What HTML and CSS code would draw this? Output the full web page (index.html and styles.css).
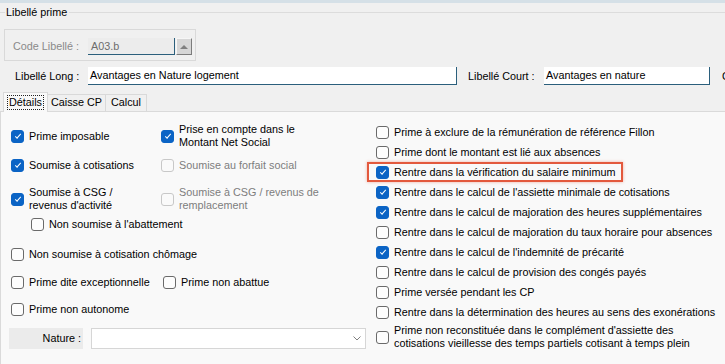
FILE: index.html
```html
<!DOCTYPE html>
<html lang="fr">
<head>
  <meta charset="UTF-8">
  <title>Libellé prime</title>
  <link rel="stylesheet" href="styles.css">
</head>
<body>
  <div class="titlebar"></div>

  <div class="group-title"><span>Libellé prime</span></div>

  <div class="code-box">
    <span class="lbl muted">Code Libellé :</span>
    <span class="field disabled">A03.b</span>
    <span class="spin"></span>
  </div>

  <div class="libelle-row">
    <span class="lbl long-lbl">Libellé Long :</span>
    <span class="field long">Avantages en Nature logement</span>
    <span class="lbl court-lbl">Libellé Court :</span>
    <span class="field court">Avantages en nature</span>
    <span class="lbl cut">C</span>
  </div>

  <div class="tabs">
    <div class="tab active"><span>Détails</span></div>
    <div class="tab caisse">Caisse CP</div>
    <div class="tab calcul">Calcul</div>
  </div>

  <div class="panel">
    <div class="col-left">
      <div class="row r1">
        <label class="check"><input type="checkbox" checked>Prime imposable</label>
        <label class="check"><input type="checkbox" checked><span>Prise en compte dans le<br>Montant Net Social</span></label>
      </div>
      <div class="row r2">
        <label class="check"><input type="checkbox" checked>Soumise à cotisations</label>
        <label class="check off"><input type="checkbox" disabled>Soumise au forfait social</label>
      </div>
      <div class="row r3">
        <label class="check"><input type="checkbox" checked><span>Soumise à CSG /<br>revenus d'activité</span></label>
        <label class="check off"><input type="checkbox" disabled><span>Soumise à CSG / revenus de<br>remplacement</span></label>
      </div>
      <div class="row r4">
        <label class="check"><input type="checkbox">Non soumise à l'abattement</label>
      </div>
      <div class="row r5">
        <label class="check"><input type="checkbox">Non soumise à cotisation chômage</label>
      </div>
      <div class="row r6">
        <label class="check"><input type="checkbox">Prime dite exceptionnelle</label>
        <label class="check"><input type="checkbox">Prime non abattue</label>
      </div>
      <div class="row r7">
        <label class="check"><input type="checkbox">Prime non autonome</label>
      </div>
      <div class="nature">
        <span class="nature-lbl">Nature :</span>
        <div class="select">
          <svg width="8" height="5" viewBox="0 0 8 5"><path d="M0.5 0.5L4 4L7.5 0.5" fill="none" stroke="#808080" stroke-width="1"/></svg>
        </div>
      </div>
    </div>

    <div class="col-right">
      <label class="check"><input type="checkbox">Prime à exclure de la rémunération de référence Fillon</label>
      <label class="check"><input type="checkbox">Prime dont le montant est lié aux absences</label>
      <label class="check hl"><input type="checkbox" checked>Rentre dans la vérification du salaire minimum</label>
      <label class="check"><input type="checkbox" checked>Rentre dans le calcul de l'assiette minimale de cotisations</label>
      <label class="check"><input type="checkbox" checked>Rentre dans le calcul de majoration des heures supplémentaires</label>
      <label class="check"><input type="checkbox">Rentre dans le calcul de majoration du taux horaire pour absences</label>
      <label class="check"><input type="checkbox" checked>Rentre dans le calcul de l'indemnité de précarité</label>
      <label class="check"><input type="checkbox">Rentre dans le calcul de provision des congés payés</label>
      <label class="check"><input type="checkbox">Prime versée pendant les CP</label>
      <label class="check"><input type="checkbox">Rentre dans la détermination des heures au sens des exonérations</label>
      <label class="check two"><input type="checkbox"><span>Prime non reconstituée dans le complément d'assiette des<br>cotisations vieillesse des temps partiels cotisant à temps plein</span></label>
    </div>
  </div>
</body>
</html>
```

FILE: styles.css
```css
* {
  box-sizing: border-box;
}

body {
  margin: 0;
  width: 725px;
  height: 364px;
  overflow: hidden;
  background: #f0f0f0;
  color: #000;
  font: 10.8px "Liberation Sans", Arial, sans-serif;
}

.titlebar {
  height: 3px;
  background: #d5e0e7;
}

/* group header */
.group-title {
  display: flex;
  align-items: center;
  height: 18px;
}
.group-title::before {
  content: '';
  width: 5px;
  border-top: 1px solid #dcdcdc;
}
.group-title::after {
  content: '';
  flex: 1;
  border-top: 1px solid #dcdcdc;
}
.group-title span {
  padding: 0 2px 0 1px;
  white-space: nowrap;
}

.code-box {
  display: flex;
  align-items: flex-start;
  width: 192px;
  height: 32px;
  margin: 8px 0 0 4px;
  padding: 8px 0 0 8px;
  border: 1px solid #d9d9d9;
}

.lbl {
  flex: none;
  white-space: nowrap;
}
.muted {
  color: #8a8a8a;
}
.code-box .lbl {
  width: 75px;
  line-height: 17px;
}

.field {
  display: block;
  flex: none;
  height: 18px;
  padding-left: 2px;
  background: #fff;
  border-right: 1px solid #2b5f7c;
  border-bottom: 1px solid #2b5f7c;
  line-height: 17px;
  white-space: nowrap;
  overflow: hidden;
}
.field.disabled {
  width: 87px;
  height: 17px;
  padding-left: 3px;
  background: #ececec;
  color: #6d6d6d;
  line-height: 16px;
}

.spin {
  display: flex;
  flex: none;
  align-items: center;
  justify-content: center;
  width: 16px;
  height: 17px;
  margin-left: 1px;
  background: #d6d6d6;
  border: 1px solid;
  border-color: #f6f6f6 #7c7c7c #7c7c7c #f6f6f6;
}
.spin::after {
  content: '';
  border-left: 4px solid transparent;
  border-right: 4px solid transparent;
  border-bottom: 4px solid #7f7f7f;
}

.libelle-row {
  display: flex;
  align-items: center;
  height: 18px;
  margin-top: 6px;
  padding-left: 15px;
}
.long-lbl {
  width: 73px;
}
.field.long {
  width: 369px;
}
.court-lbl {
  width: 76px;
  margin-left: 11px;
}
.field.court {
  width: 166px;
}
.cut {
  margin-left: 12px;
}

/* tabs */
.tabs {
  position: relative;
  z-index: 1;
  display: flex;
  align-items: flex-end;
  height: 19px;
  margin-top: 7px;
  padding-left: 3px;
}
.tab {
  height: 17px;
  background: #f0f0f0;
  border: 1px solid #d9d9d9;
  border-bottom: none;
  border-left: none;
  line-height: 14px;
  text-align: center;
}
.tab.active {
  width: 45px;
  height: 20px;
  margin-bottom: -1px;
  padding-top: 2px;
  background: #f9f9f9;
  border-left: 1px solid #d9d9d9;
}
.tab.active span {
  display: inline-block;
  padding: 0 1px;
  outline: 1px dotted #222;
  line-height: 13px;
}
.tab.caisse {
  width: 58px;
}
.tab.calcul {
  width: 41px;
}

.panel {
  display: grid;
  grid-template-columns: 375px 1fr;
  height: 253px;
  background: #f9f9f9;
  border-top: 1px solid #dadada;
  border-left: 1px solid #dadada;
}

/* checkboxes */
.check {
  display: flex;
  align-items: center;
  gap: 5px;
  line-height: 13px;
  white-space: nowrap;
}
.check input {
  appearance: none;
  display: grid;
  place-items: center;
  flex: none;
  width: 13px;
  height: 13px;
  margin: 0;
  background: #fdfdfd;
  border: 1px solid #6a6a6a;
  border-radius: 3px;
}
.check input:checked {
  background: #0b64c5;
  border-color: #0b64c5;
}
.check input:checked::after {
  content: '';
  width: 5px;
  height: 2px;
  margin-top: -2px;
  border-left: 1px solid #fff;
  border-bottom: 1px solid #fff;
  transform: rotate(-48deg);
}
.check input:disabled {
  background: #fafafa;
  border-color: #c8c8c8;
}
.check.off {
  color: #7d7d7d;
}

.col-left {
  padding: 11px 0 0 10px;
}
.row {
  display: grid;
  grid-template-columns: 150px auto;
  align-items: center;
  height: 14px;
}
.row.r1 {
  height: 26px;
}
.row.r2 {
  margin-top: 9px;
}
.row.r3 {
  height: 26px;
  margin-top: 14px;
}
.row.r4 {
  margin-top: 5px;
  padding-left: 20px;
}
.row.r5 {
  margin-top: 16px;
}
.row.r6 {
  grid-template-columns: 152px auto;
  margin-top: 14px;
}
.row.r7 {
  margin-top: 13px;
}

.nature {
  display: flex;
  gap: 8px;
  margin: 12px 0 0 -2px;
}
.nature-lbl {
  width: 74px;
  height: 21px;
  padding-right: 2px;
  background: #ebebeb;
  line-height: 21px;
  text-align: right;
}
.select {
  display: flex;
  align-items: center;
  justify-content: flex-end;
  width: 275px;
  height: 21px;
  padding-right: 4px;
  background: #fff;
  border: 1px solid #d6d6d6;
}

.col-right {
  display: flex;
  flex-direction: column;
  padding-top: 10px;
}
.col-right .check {
  height: 20px;
}
.col-right .check.two {
  height: 26px;
  margin-top: 2px;
}
.check.hl {
  position: relative;
  width: fit-content;
}
.check.hl::after {
  content: '';
  position: absolute;
  inset: 0 -8px 0 -9px;
  border: 2px solid #e3593d;
  box-shadow: 0 0 3px rgba(227, 89, 61, 0.45);
  pointer-events: none;
}
```
